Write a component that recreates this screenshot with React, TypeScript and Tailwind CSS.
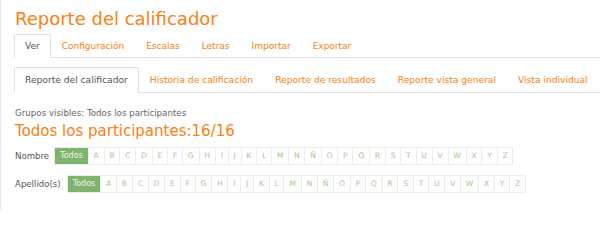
import React from "react";

const letters = ["A","B","C","D","E","F","G","H","I","J","K","L","M","N","Ñ","O","P","Q","R","S","T","U","V","W","X","Y","Z"];

function Tabs({ items, active, py, size }: { items: string[]; active: number; py: string; size: string }) {
  return (
    <ul className="flex border-b border-[#e3e3e3]">
      {items.map((t, i) => (
        <li key={t} className="-mb-px shrink-0">
          <span
            className={
              "block whitespace-nowrap px-[10px] leading-[14px] border rounded-t-[2px] " +
              size +
              " " +
              py +
              " " +
              (i === active
                ? "border-[#e0e0e0] border-b-white bg-white text-[#555]"
                : "border-transparent text-[#f98012]")
            }
          >
            {t}
          </span>
        </li>
      ))}
    </ul>
  );
}

function Bar({ label, gap }: { label: string; gap: string }) {
  return (
    <div className={"flex items-center " + gap}>
      <span className="text-[8.6px] text-[#555] leading-[12px] whitespace-nowrap">{label}</span>
      <div className="flex h-[18px] border border-[#ececec]">
        <span className="flex items-center px-[5px] bg-[#80b36d] text-[8px] text-[#eef6ea]">Todos</span>
        {letters.map((l) => (
          <span
            key={l}
            className="flex items-center justify-center px-[4.8px] border-l border-[#ececec] text-[7.6px] text-[#9ccc8c]"
          >
            {l}
          </span>
        ))}
      </div>
    </div>
  );
}

export default function App() {
  return (
    <div
      className="w-[600px] h-[210px] overflow-hidden bg-white border-l border-[#e8e8e8] pl-[13px]"
      style={{ fontFamily: '"DejaVu Sans", sans-serif' }}
    >
      <h1 className="pt-[8px] text-[18px] leading-[21px] text-[#f98012] pl-px">Reporte del calificador</h1>
      <div className="mt-[5px]">
        <Tabs
          items={["Ver", "Configuración", "Escalas", "Letras", "Importar", "Exportar"]}
          active={0}
          py="py-[4px]"
          size="text-[9px]"
        />
      </div>
      <div className="mt-[9px]">
        <Tabs
          items={[
            "Reporte del calificador",
            "Historia de calificación",
            "Reporte de resultados",
            "Reporte vista general",
            "Vista individual",
          ]}
          active={0}
          py="py-[5px]"
          size="text-[9.15px]"
        />
      </div>
      <div className="pl-px">
        <p className="mt-[14px] text-[8.7px] leading-[12px] text-[#666]">Grupos visibles: Todos los participantes</p>
        <h2 className="mt-[3px] text-[15px] leading-[18px] text-[#f98012]">Todos los participantes:16/16</h2>
        <div className="mt-[7px]">
          <Bar label="Nombre" gap="gap-[5px]" />
        </div>
        <div className="mt-[10px]">
          <Bar label="Apellido(s)" gap="gap-[6px]" />
        </div>
      </div>
    </div>
  );
}
